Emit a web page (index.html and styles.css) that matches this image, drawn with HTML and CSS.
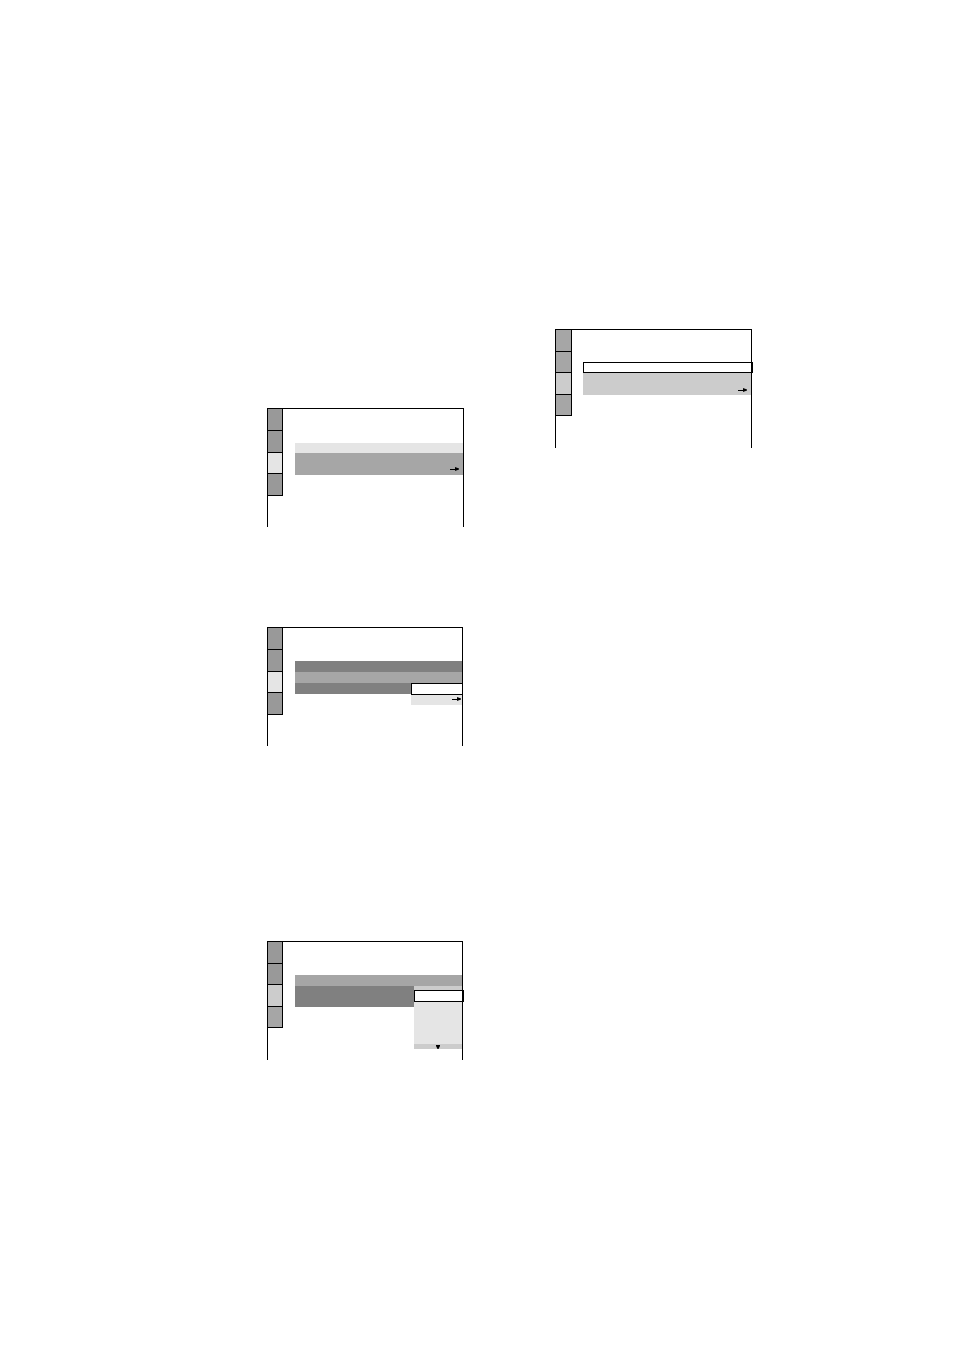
FILE: index.html
```html
<!DOCTYPE html>
<html lang="en">
<head>
    <meta charset="UTF-8">
    <meta name="viewport" content="width=device-width, initial-scale=1.0">
    <title>Setup Menu</title>
    <link rel="stylesheet" href="styles.css">
</head>
<body>
    <main class="page">
        <div class="column column-left">
            <section class="screen screen-list">
                <nav class="tabs">
                    <button class="tab" aria-label="Tab 1"></button>
                    <button class="tab" aria-label="Tab 2"></button>
                    <button class="tab active" aria-label="Tab 3"></button>
                    <button class="tab" aria-label="Tab 4"></button>
                </nav>
                <ul class="menu">
                    <li class="row light"></li>
                    <li class="row gray"></li>
                    <li class="row gray arrow-row">
                        <svg class="arrow" width="9" height="5" viewBox="0 0 9 5"><path d="M0 2h6v1H0z"/><path d="M5 0l4 1.5v1L5 4z"/></svg>
                    </li>
                </ul>
            </section>

            <section class="screen screen-option">
                <nav class="tabs">
                    <button class="tab" aria-label="Tab 1"></button>
                    <button class="tab" aria-label="Tab 2"></button>
                    <button class="tab active" aria-label="Tab 3"></button>
                    <button class="tab" aria-label="Tab 4"></button>
                </nav>
                <ul class="menu">
                    <li class="row dark"></li>
                    <li class="row gray"></li>
                    <li class="split">
                        <div class="row dark"></div>
                        <div class="options">
                            <div class="selected"></div>
                            <div class="option light arrow-row">
                                <svg class="arrow" width="9" height="5" viewBox="0 0 9 5"><path d="M0 2h6v1H0z"/><path d="M5 0l4 1.5v1L5 4z"/></svg>
                            </div>
                        </div>
                    </li>
                </ul>
            </section>

            <section class="screen screen-scroll">
                <nav class="tabs tabs-short">
                    <button class="tab" aria-label="Tab 1"></button>
                    <button class="tab" aria-label="Tab 2"></button>
                    <button class="tab active-dim" aria-label="Tab 3"></button>
                    <button class="tab gray" aria-label="Tab 4"></button>
                </nav>
                <ul class="menu">
                    <li class="row gray"></li>
                    <li class="split">
                        <div class="label dark"></div>
                        <div class="options">
                            <div class="scroll-up silver"></div>
                            <div class="selected"></div>
                            <div class="scroll-list light"></div>
                            <div class="scroll-down silver">
                                <svg width="4" height="4" viewBox="0 0 4 4"><path d="M0 0h4v1L2.5 4h-1L0 1z"/></svg>
                            </div>
                        </div>
                    </li>
                </ul>
            </section>
        </div>

        <div class="column">
            <section class="screen screen-selected">
                <nav class="tabs tabs-short tabs-wide">
                    <button class="tab gray" aria-label="Tab 1"></button>
                    <button class="tab gray" aria-label="Tab 2"></button>
                    <button class="tab active-dim" aria-label="Tab 3"></button>
                    <button class="tab gray" aria-label="Tab 4"></button>
                </nav>
                <ul class="menu">
                    <li class="row selected"></li>
                    <li class="row silver"></li>
                    <li class="row silver arrow-row">
                        <svg class="arrow" width="9" height="5" viewBox="0 0 9 5"><path d="M0 2h6v1H0z"/><path d="M5 0l4 1.5v1L5 4z"/></svg>
                    </li>
                </ul>
            </section>
        </div>
    </main>
</body>
</html>
```

FILE: styles.css
```css
* {
    box-sizing: border-box;
}

body {
    font-family: "Liberation Sans", Arial, sans-serif;
    background-color: #fff;
    margin: 0;
}

.page {
    display: grid;
    grid-template-columns: 1fr 1fr;
    column-gap: 91px;
    align-items: start;
    min-height: 100vh;
    padding: 329px 202px 0 267px;
}

.column-left {
    padding-top: 79px;
}

.screen {
    display: grid;
    grid-template-columns: 27px 1fr;
    align-items: start;
    min-height: 119px;
    border: 1px solid #000;
    border-bottom: none;
}

.screen-option {
    margin-top: 100px;
    margin-right: 1px;
}

.screen-scroll {
    margin-top: 195px;
    margin-right: 1px;
}

/* side tabs */
.tabs {
    display: grid;
    grid-template-rows: 22px 22px 21px 22px;
    width: 15px;
    border-right: 1px solid #000;
}

.tabs-short {
    grid-template-rows: 22px 21px 22px 21px;
}

.tabs-wide {
    width: 16px;
}

.tab {
    background-color: #999;
    border: none;
    border-bottom: 1px solid #000;
    border-radius: 0;
    padding: 0;
    cursor: pointer;
}

.active {
    background-color: #e5e5e5;
}

.active-dim {
    background-color: #ccc;
}

/* menu rows */
.menu {
    list-style: none;
    margin: 0;
    padding: 33px 0 0;
}

.screen-list .menu {
    padding-top: 34px;
}

.screen-selected .menu {
    padding-top: 32px;
}

.row {
    height: 11px;
}

.light {
    background-color: #e5e5e5;
}

.silver {
    background-color: #ccc;
}

.gray {
    background-color: #a6a6a6;
}

.dark {
    background-color: #808080;
}

.screen-list .light {
    height: 10px;
}

.arrow-row {
    display: flex;
    justify-content: flex-end;
    align-items: flex-end;
    padding: 0 4px 3px 0;
}

.screen-selected .arrow-row {
    padding-bottom: 2px;
}

.selected {
    height: 12px;
    background-color: #fff;
    border: 1px solid #000;
}

/* the highlight runs over the frame of the screen */
.screen-selected .selected,
.screen-scroll .selected {
    margin-right: -2px;
    border-right-width: 2px;
}

.screen-selected .selected {
    height: 11px;
}

/* rows with an option list */
.split {
    display: grid;
    grid-template-columns: 1fr 51px;
    align-items: start;
}

.screen-scroll .split {
    grid-template-columns: 1fr 48px;
}

.label {
    height: 21px;
}

.option {
    height: 10px;
}

.screen-option .selected {
    border-right: none;
}

.screen-option .arrow-row {
    padding-right: 1px;
}

.scroll-up {
    height: 4px;
}

.scroll-list {
    height: 42px;
}

.scroll-down {
    display: flex;
    justify-content: center;
    align-items: flex-end;
    height: 5px;
}
```
